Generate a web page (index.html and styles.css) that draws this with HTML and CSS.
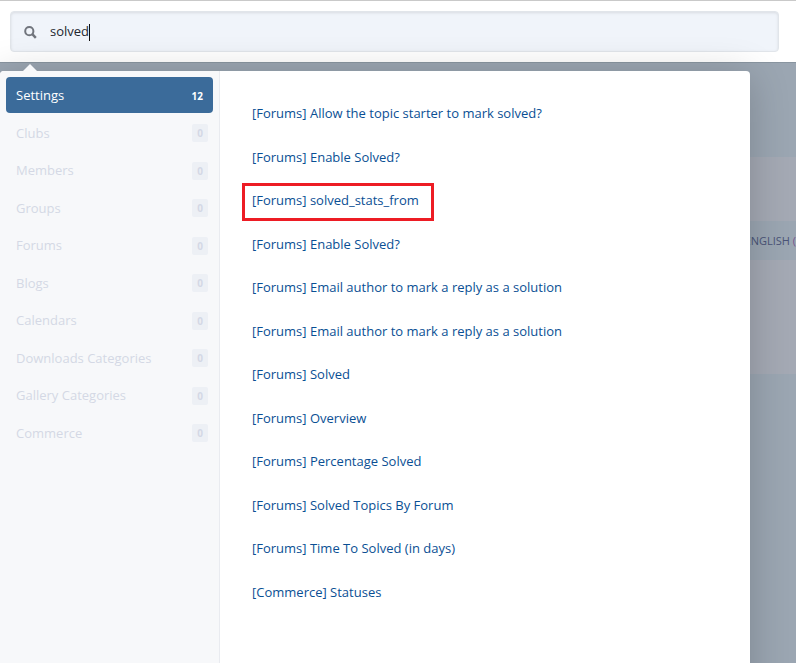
FILE: index.html
```html
<!DOCTYPE html>
<html lang="en">
<head>
<meta charset="utf-8">
<title>Search</title>
<link rel="stylesheet" href="styles.css">
</head>
<body>
<header class="topbar">
  <form class="search" role="search">
    <label class="search-icon" for="q" aria-label="Search">
      <svg width="13" height="13" viewBox="0 0 13 13" fill="none" stroke="#71757d" stroke-width="2"><circle cx="5.3" cy="5.2" r="4.1"/><path d="M8.3 8.2L11.8 11.8" stroke-width="2.4"/></svg>
    </label>
    <input class="search-input" id="q" type="text" value="solved" autocomplete="off">
    <span class="caret"></span>
  </form>
</header>
<main class="stage">
  <div class="page">
    <div class="band"></div>
    <div class="toolbar"><span>ENGLISH</span> <span class="toolbar-count">(</span></div>
    <div class="band band-tall"></div>
  </div>
  <section class="panel">
    <nav class="sidebar">
      <a class="tab tab-active" href="#settings">Settings <span class="count">12</span></a>
      <a class="tab" href="#clubs">Clubs <span class="count">0</span></a>
      <a class="tab" href="#members">Members <span class="count">0</span></a>
      <a class="tab" href="#groups">Groups <span class="count">0</span></a>
      <a class="tab" href="#forums">Forums <span class="count">0</span></a>
      <a class="tab" href="#blogs">Blogs <span class="count">0</span></a>
      <a class="tab" href="#calendars">Calendars <span class="count">0</span></a>
      <a class="tab" href="#downloads">Downloads Categories <span class="count">0</span></a>
      <a class="tab" href="#gallery">Gallery Categories <span class="count">0</span></a>
      <a class="tab" href="#commerce">Commerce <span class="count">0</span></a>
    </nav>
    <ul class="results">
      <li><a href="#r1">[Forums] Allow the topic starter to mark solved?</a></li>
      <li><a href="#r2">[Forums] Enable Solved?</a></li>
      <li class="marked"><a href="#r3">[Forums] solved_stats_from</a></li>
      <li><a href="#r4">[Forums] Enable Solved?</a></li>
      <li><a href="#r5">[Forums] Email author to mark a reply as a solution</a></li>
      <li><a href="#r6">[Forums] Email author to mark a reply as a solution</a></li>
      <li><a href="#r7">[Forums] Solved</a></li>
      <li><a href="#r8">[Forums] Overview</a></li>
      <li><a href="#r9">[Forums] Percentage Solved</a></li>
      <li><a href="#r10">[Forums] Solved Topics By Forum</a></li>
      <li><a href="#r11">[Forums] Time To Solved (in days)</a></li>
      <li><a href="#r12">[Commerce] Statuses</a></li>
    </ul>
  </section>
</main>
</body>
</html>
```
FILE: styles.css
```css
*, *::before, *::after { box-sizing: border-box; }

body {
  margin: 0;
  height: 100vh;
  display: flex;
  flex-direction: column;
  overflow: hidden;
  background: #9ba6b2;
  color: #23262f;
  font: 13px/1.5 "Open Sans", "Noto Sans", sans-serif;
}

a { text-decoration: none; }

.topbar {
  padding: 10px 17px 10px 10px;
  background: #fff;
  border-top: 1px solid #c9c9c9;
  border-bottom: 1px solid #8995a0;
}

.search {
  display: flex;
  align-items: center;
  height: 41px;
  padding: 1px 13px 0;
  background: #f0f4fa;
  border: 1px solid #e1e5ea;
  border-radius: 4px;
  box-shadow: inset 0 1px 3px rgba(0, 0, 0, 0.1);
}

.search-icon { display: flex; margin-right: 13px; }

.search-input {
  field-sizing: content;
  min-width: 0;
  padding: 0;
  border: 0;
  outline: 0;
  background: none;
  color: inherit;
  font: inherit;
}

.caret { width: 1px; height: 17px; background: #111; }

.stage {
  flex: 1;
  min-height: 0;
  display: grid;
  grid-template: 100% / 100%;
}

.page, .panel { grid-area: 1 / 1; }

.page { padding-top: 94px; }

.band { height: 64px; background: #a4a9b4; }
.band-tall { height: 114px; }

.toolbar {
  height: 39px;
  color: #4a5477;
  font-size: 11px;
  line-height: 39px;
  text-align: right;
}

.toolbar-count { color: #75558d; }

.panel {
  position: relative;
  display: flex;
  margin: 8px 46px -60px 0;
  background: #fff;
  border-radius: 4px;
  box-shadow: 0 5px 40px rgba(0, 0, 0, 0.2);
}

.panel::before {
  content: "";
  position: absolute;
  top: -7px;
  left: 23px;
  border: 7px solid transparent;
  border-top: 0;
  border-bottom-color: #f7f8fa;
}

.sidebar {
  flex: 0 0 220px;
  padding: 6px;
  background: #f7f8fa;
  border-right: 1px solid #e9ebf0;
  border-radius: 4px 0 0 4px;
}

.tab {
  display: flex;
  justify-content: space-between;
  align-items: center;
  margin-bottom: 2px;
  padding: 9px 5px 7px 10px;
  border-radius: 4px;
  color: #d4d8e5;
}

.count {
  padding: 0 5px;
  border-radius: 2px;
  background: #edf0f5;
  font-size: 10px;
  font-weight: 700;
  line-height: 18px;
}

.tab-active { background: #3b6b9a; color: #fff; }
.tab-active .count { background: none; }

.results {
  flex: 1;
  margin: 0;
  padding: 21px 32px;
  list-style: none;
}

.results li { position: relative; padding: 12px 0; }
.results a { color: #0a4f94; }

.marked::after {
  content: "";
  position: absolute;
  top: 4px;
  left: -10px;
  width: 192px;
  height: 38px;
  border: 3px solid #ed1c24;
  pointer-events: none;
}
```
